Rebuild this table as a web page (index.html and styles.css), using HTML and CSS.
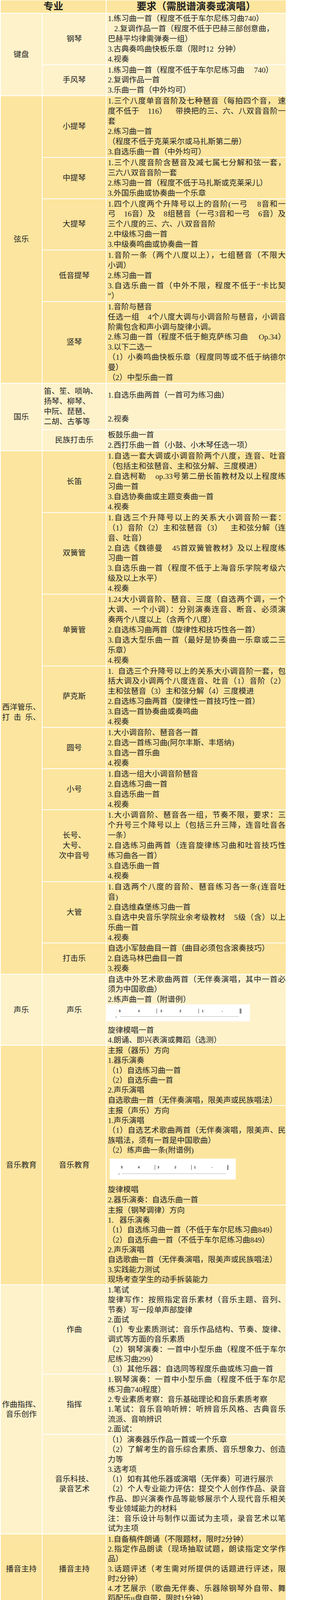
FILE: index.html
```html
<!DOCTYPE html>
<html lang="zh-CN">
<head>
<meta charset="utf-8">
<meta name="viewport" content="width=device-width, initial-scale=1">
<title>专业要求</title>
<link rel="stylesheet" href="styles.css">
</head>
<body>
<table class="sheet">
<colgroup><col class="w1"><col class="w2"><col class="w3"></colgroup>
<thead>
<tr class="hd"><th colspan="2">专业</th><th>要求（需脱谱演奏或演唱）</th></tr>
</thead>

<tbody class="light hi">
<tr>
<td class="cat" rowspan="2">键盘</td>
<td class="sub">钢琴</td>
<td class="req">
<div class="ln">1.练习曲一首（程度不低于车尔尼练习曲740）</div>
<div class="ln in">2.复调作品一首（程度不低于巴赫三部创意曲，</div>
<div class="ln">巴赫平均律需弹奏一组）</div>
<div class="ln">3.古典奏鸣曲快板乐章（限时12&nbsp;&nbsp;分钟）</div>
<div class="ln">4.视奏</div>
</td>
</tr>
<tr>
<td class="sub">手风琴</td>
<td class="req">
<div class="ln">1.练习曲一首（程度不低于车尔尼练习曲&nbsp;&nbsp;&nbsp;&nbsp;&nbsp;740）</div>
<div class="ln">2.复调作品一首</div>
<div class="ln">3.乐曲一首（中外均可）</div>
</td>
</tr>
</tbody>

<tbody class="dark hi">
<tr>
<td class="cat" rowspan="5">弦乐</td>
<td class="sub">小提琴</td>
<td class="req">
<div class="ln j">1.三个八度单音音阶及七种琶音（每拍四个音， 速</div>
<div class="ln j">度不低于&nbsp;&nbsp;&nbsp;&nbsp;116）&nbsp;&nbsp;&nbsp;&nbsp;带换把的三、六、八双音音阶一</div>
<div class="ln">套</div>
<div class="ln">2.练习曲一首</div>
<div class="ln">（程度不低于克莱采尔或马扎斯第二册）</div>
<div class="ln">3.自选乐曲一首（中外均可）</div>
</td>
</tr>
<tr>
<td class="sub">中提琴</td>
<td class="req">
<div class="ln j">1.三个八度音阶含琶音及减七属七分解和弦一套，</div>
<div class="ln">三六八双音音阶一套</div>
<div class="ln">2.练习曲一首（程度不低于马扎斯或克莱采儿）</div>
<div class="ln">3.外国乐曲或协奏曲一个乐章</div>
</td>
</tr>
<tr>
<td class="sub">大提琴</td>
<td class="req">
<div class="ln j">1.四个八度两个升降号以上的音阶(一弓&nbsp;&nbsp;&nbsp;&nbsp;8音和一</div>
<div class="ln j">弓&nbsp;&nbsp;&nbsp;&nbsp;16音）及&nbsp;&nbsp;&nbsp;&nbsp;8组琶音（一弓3音和一弓&nbsp;&nbsp;&nbsp;&nbsp;6音）及</div>
<div class="ln">三个八度的三、六、八双音音阶</div>
<div class="ln">2.中级练习曲一首</div>
<div class="ln">3.中级奏鸣曲或协奏曲一首</div>
</td>
</tr>
<tr>
<td class="sub">低音提琴</td>
<td class="req">
<div class="ln j">1.音阶一条（两个八度以上），七组琶音（不限大</div>
<div class="ln">小调）</div>
<div class="ln">2.练习曲一首</div>
<div class="ln j">3.自选乐曲一首（中外不限，程度不低于“卡比契</div>
<div class="ln">”）</div>
</td>
</tr>
<tr>
<td class="sub">竖琴</td>
<td class="req">
<div class="ln">1.音阶与琶音</div>
<div class="ln j">任选一组&nbsp;&nbsp;&nbsp;&nbsp;4个八度大调与小调音阶与琶音，小调音</div>
<div class="ln">阶需包含和声小调与旋律小调。</div>
<div class="ln j">2.练习曲一首（程度不低于鲍克萨练习曲&nbsp;&nbsp;&nbsp;&nbsp;&nbsp;Op.34）</div>
<div class="ln">3.以下二选一</div>
<div class="ln j">（1）小奏鸣曲快板乐章（程度同等或不低于纳德尔</div>
<div class="ln">曼）</div>
<div class="ln">（2）中型乐曲一首</div>
</td>
</tr>
</tbody>

<tbody class="light hi">
<tr>
<td class="cat" rowspan="2">国乐</td>
<td class="sub left">
<div class="lb">笛、笙、唢呐、</div>
<div class="lb">扬琴、柳琴、</div>
<div class="lb">中阮、琵琶、</div>
<div class="lb">二胡、古筝等</div>
</td>
<td class="req spread">
<div class="ln">1.自选乐曲两首（一首可为练习曲）</div>
<div class="gap"></div>
<div class="ln">2.视奏</div>
</td>
</tr>
<tr>
<td class="sub">民族打击乐</td>
<td class="req">
<div class="ln">板鼓乐曲一首</div>
<div class="ln">2.西打乐曲一首（小鼓、小木琴任选一项）</div>
</td>
</tr>
</tbody>

<tbody class="dark hi">
<tr>
<td class="cat" rowspan="9"><div class="lb">西洋管乐、</div><div class="lb">打&nbsp;&nbsp;击&nbsp;&nbsp;乐、</div></td>
<td class="sub">长笛</td>
<td class="req">
<div class="ln j">1.自选一套大调或小调音阶两个八度，连音、吐音</div>
<div class="ln">（包括主和弦琶音、主和弦分解、三度模进）</div>
<div class="ln j">2.自选柯勒&nbsp;&nbsp;&nbsp;&nbsp;op.33号第二册长笛教材及以上程度练</div>
<div class="ln">习曲一首</div>
<div class="ln">3.自选协奏曲或主题变奏曲一首</div>
<div class="ln">4.视奏</div>
</td>
</tr>
<tr>
<td class="sub">双簧管</td>
<td class="req">
<div class="ln j">1.自选三个升降号以上的关系大小调音阶一套：</div>
<div class="ln j">（1）音阶（2）主和弦琶音（3）&nbsp;&nbsp;&nbsp;&nbsp;主和弦分解（连</div>
<div class="ln">音、吐音）</div>
<div class="ln j">2.自选《魏德曼&nbsp;&nbsp;&nbsp;&nbsp;45首双簧管教材》及以上程度练</div>
<div class="ln">习曲一首</div>
<div class="ln j">3.自选乐曲一首（程度不低于上海音乐学院考级六</div>
<div class="ln">级及以上水平）</div>
<div class="ln">4.视奏</div>
</td>
</tr>
<tr>
<td class="sub">单簧管</td>
<td class="req">
<div class="ln j">1.24大小调音阶、琶音、三度（自选两个调，一个</div>
<div class="ln j">大调、一个小调）：分别演奏连音、断音、必须演</div>
<div class="ln">奏两个八度以上（含两个八度）</div>
<div class="ln">2.自选练习曲两首（旋律性和技巧性各一首）</div>
<div class="ln j">3.自选大型乐曲一首（最好是协奏曲一乐章或二三</div>
<div class="ln">乐章）</div>
<div class="ln">4.视奏</div>
</td>
</tr>
<tr>
<td class="sub">萨克斯</td>
<td class="req">
<div class="ln j">1.&nbsp;&nbsp;自选三个升降号以上的关系大小调音阶一套，包</div>
<div class="ln j">括大调及小调两个八度连音、吐音（1）音阶（2）</div>
<div class="ln">主和弦琶音（3）主和弦分解（4）三度模进</div>
<div class="ln">2.自选练习曲两首（旋律性一首技巧性一首）</div>
<div class="ln">3.自选一首协奏曲或奏鸣曲</div>
<div class="ln">4.视奏</div>
</td>
</tr>
<tr>
<td class="sub">圆号</td>
<td class="req">
<div class="ln">1.大小调音阶、琶音各一首</div>
<div class="ln">2.自选一首练习曲(阿尔丰斯、丰塔纳)</div>
<div class="ln">3.自选一首乐曲</div>
<div class="ln">4.视奏</div>
</td>
</tr>
<tr>
<td class="sub">小号</td>
<td class="req">
<div class="ln">1.自选一组大小调音阶琶音</div>
<div class="ln">2.自选练习曲一首</div>
<div class="ln">3.自选乐曲一首</div>
<div class="ln">4.视奏</div>
</td>
</tr>
<tr>
<td class="sub"><div class="lb">长号、</div><div class="lb">大号、</div><div class="lb">次中音号</div></td>
<td class="req">
<div class="ln j">1.大小调音阶、琶音各一组，节奏不限，要求：三</div>
<div class="ln j">个升号三个降号以上（包括三升三降，连音吐音各</div>
<div class="ln">一条）</div>
<div class="ln j">2.自选练习曲两首（连音旋律练习曲和吐音技巧性</div>
<div class="ln">练习曲各一首）</div>
<div class="ln">3.自选乐曲一首</div>
<div class="ln">4.视奏</div>
</td>
</tr>
<tr>
<td class="sub">大管</td>
<td class="req">
<div class="ln j">1.自选两个八度的音阶、琶音练习各一条(连音吐</div>
<div class="ln">音)</div>
<div class="ln">2.自选维森堡练习曲一首</div>
<div class="ln j">3.自选中央音乐学院业余考级教材&nbsp;&nbsp;&nbsp;&nbsp;5级（含）以上</div>
<div class="ln">乐曲一首</div>
<div class="ln">4.视奏</div>
</td>
</tr>
<tr>
<td class="sub">打击乐</td>
<td class="req">
<div class="ln">自选小军鼓曲目一首（曲目必须包含滚奏技巧）</div>
<div class="ln">2.自选马林巴曲目一首</div>
<div class="ln">3.视奏</div>
</td>
</tr>
</tbody>

<tbody class="light lo">
<tr>
<td class="cat">声乐</td>
<td class="sub">声乐</td>
<td class="req">
<div class="ln j">自选中外艺术歌曲两首（无伴奏演唱，其中一首必</div>
<div class="ln">须为中国歌曲）</div>
<div class="ln">2.练声曲一首（附谱例）</div>
<svg class="score s1" viewBox="0 0 404 48">
<rect width="404" height="48" fill="#ffffff"/>
<g font-family="Liberation Sans, Arial, sans-serif" font-size="9" font-weight="bold" fill="#333333" text-anchor="middle">
<text x="37" y="22">5</text>
<text x="91" y="22">4</text>
<text x="154" y="22">3</text>
<text x="208" y="22">2</text>
<text x="271" y="22">1</text>
<text x="326" y="22">-</text>
</g>
<g stroke="#333333">
<line x1="141.5" y1="12" x2="141.5" y2="26" stroke-width="1"/>
<line x1="259.5" y1="12" x2="259.5" y2="26" stroke-width="1"/>
<line x1="375.5" y1="12" x2="375.5" y2="26" stroke-width="1"/>
<line x1="378.5" y1="12" x2="378.5" y2="26" stroke-width="2"/>
</g>
<text x="27" y="37" font-family="Liberation Sans, Arial, sans-serif" font-size="6" fill="#555555" text-anchor="middle">a</text>
<line x1="38" y1="34.5" x2="373" y2="34.5" stroke="#aaaaaa" stroke-width="1"/>
</svg>
<div class="ln">旋律模唱一首</div>
<div class="ln">4.朗诵、即兴表演或舞蹈（选测）</div>
</td>
</tr>
</tbody>

<tbody class="dark lo">
<tr>
<td class="cat" rowspan="3">音乐教育</td>
<td class="sub" rowspan="3">音乐教育</td>
<td class="req">
<div class="ln">主报（器乐）方向</div>
<div class="ln">1.器乐演奏</div>
<div class="ln">（1）自选练习曲一首</div>
<div class="ln">（2）自选乐曲一首</div>
<div class="ln">2.声乐演唱</div>
<div class="ln">自选歌曲一首（无伴奏演唱，限美声或民族唱法）</div>
</td>
</tr>
<tr>
<td class="req">
<div class="ln">主报（声乐）方向</div>
<div class="ln">1.声乐演唱</div>
<div class="ln j">（1）自选艺术歌曲两首（无伴奏演唱，限美声、民</div>
<div class="ln">族唱法，须有一首是中国歌曲）</div>
<div class="ln">（2）练声曲一条(附谱例)</div>
<svg class="score s2" viewBox="0 0 356 59">
<rect width="356" height="59" fill="#ffffff"/>
<g font-family="Liberation Sans, Arial, sans-serif" font-size="9" font-weight="bold" fill="#333333" text-anchor="middle">
<text x="34" y="28">5</text>
<text x="82" y="28">4</text>
<text x="137" y="28">3</text>
<text x="185" y="28">2</text>
<text x="240" y="28">1</text>
<text x="288" y="28">-</text>
</g>
<g stroke="#333333">
<line x1="127.5" y1="18" x2="127.5" y2="32" stroke-width="1"/>
<line x1="230.5" y1="18" x2="230.5" y2="32" stroke-width="1"/>
<line x1="333" y1="18" x2="333" y2="32" stroke-width="2"/>
</g>
<text x="26" y="45" font-family="Liberation Sans, Arial, sans-serif" font-size="6" fill="#555555" text-anchor="middle">a</text>
<line x1="35" y1="42.5" x2="329" y2="42.5" stroke="#aaaaaa" stroke-width="1"/>
</svg>
<div class="ln">旋律模唱</div>
<div class="ln">2.器乐演奏：自选乐曲一首</div>
</td>
</tr>
<tr>
<td class="req">
<div class="ln">主报（钢琴调律）方向</div>
<div class="ln">1.&nbsp;&nbsp;&nbsp;器乐演奏</div>
<div class="ln">（1）自选练习曲一首（不低于车尔尼练习曲849）</div>
<div class="ln">（2）自选乐曲一首（不低于车尔尼练习曲849）</div>
<div class="ln">2.声乐演唱</div>
<div class="ln">自选歌曲一首（无伴奏演唱，限美声或民族唱法）</div>
<div class="ln">3.实践能力测试</div>
<div class="ln">现场考查学生的动手拆装能力</div>
</td>
</tr>
</tbody>

<tbody class="light lo">
<tr>
<td class="cat" rowspan="3"><div class="lb">作曲指挥、</div><div class="lb">音乐创作</div></td>
<td class="sub">作曲</td>
<td class="req">
<div class="ln">1.笔试</div>
<div class="ln j">旋律写作：按照指定音乐素材（音乐主题、音列、</div>
<div class="ln">节奏）写一段单声部旋律</div>
<div class="ln">2.面试</div>
<div class="ln j">（1）专业素质测试：音乐作品结构、节奏、旋律、</div>
<div class="ln">调式等方面的音乐素质</div>
<div class="ln j">（2）钢琴演奏：一首中小型乐曲（程度不低于车尔</div>
<div class="ln">尼练习曲299）</div>
<div class="ln">（3）其他乐器：自选同等程度乐曲或练习曲一首</div>
</td>
</tr>
<tr>
<td class="sub">指挥</td>
<td class="req">
<div class="ln j">1.钢琴演奏：一首中小型乐曲（程度不低于车尔尼</div>
<div class="ln">练习曲740程度）</div>
<div class="ln">2.专业素质考察：音乐基础理论和音乐素质考察</div>
<div class="ln j">1.笔试：音乐音响听辨：听辨音乐风格、古典音乐</div>
<div class="ln">流派、音响辨识</div>
<div class="ln">2.面试：</div>
</td>
</tr>
<tr>
<td class="sub"><div class="lb">音乐科技、</div><div class="lb">录音艺术</div></td>
<td class="req">
<div class="ln">（1）演奏器乐作品一首或一个乐章</div>
<div class="ln j">（2）了解考生的音乐综合素质、音乐想象力、创造</div>
<div class="ln">力等</div>
<div class="ln">3.选考项</div>
<div class="ln">（1）如有其他乐器或演唱（无伴奏）可进行展示</div>
<div class="ln j">（2）个人专业能力评估：提交个人创作作品、录音</div>
<div class="ln j">作品、即兴演奏作品等能够展示个人现代音乐相关</div>
<div class="ln">专业领域能力的材料</div>
<div class="ln j">注：音乐设计与制作以面试为主项，录音艺术以笔</div>
<div class="ln">试为主项</div>
</td>
</tr>
</tbody>

<tbody class="dark lo">
<tr>
<td class="cat">播音主持</td>
<td class="sub">播音主持</td>
<td class="req">
<div class="ln">1.自备稿件朗诵（不限题材，限时2分钟）</div>
<div class="ln j">2.指定作品朗读（现场抽取试题，朗读指定文学作</div>
<div class="ln">品）</div>
<div class="ln j">3.话题评述（考生需对所提供的话题进行评述，限</div>
<div class="ln">时2分钟）</div>
<div class="ln j">4.才艺展示（歌曲无伴奏、乐器除钢琴外自带、舞</div>
<div class="ln">蹈配乐u盘自带，限时1分钟）</div>
</td>
</tr>
</tbody>
</table>
</body>
</html>
```

FILE: styles.css
```css
/* One pixel of the 807px design, as rendered in the capture. */
:root { --u: calc(1px / 1.1); }

* { box-sizing: border-box; }

html, body {
  margin: 0;
  padding: 0;
  background: #ffffff;
}

body {
  font-family: "Liberation Serif", "Noto Sans CJK SC", serif;
  font-size: calc(21.7 * var(--u));
  color: #222222;
}

.sheet {
  width: calc(807 * var(--u));
  table-layout: fixed;
  border-collapse: separate;
  border-spacing: calc(3 * var(--u));
  margin-top: calc(-1 * var(--u));
  font-size: calc(21.7 * var(--u));
}

.w1 { width: calc(115 * var(--u)); }
.w2 { width: calc(178 * var(--u)); }
.w3 { width: calc(502 * var(--u)); }

.hd th {
  background: #fce59e;
  font-size: calc(28 * var(--u));
  font-weight: bold;
  line-height: calc(35 * var(--u));
  height: calc(35 * var(--u));
  padding: 0;
  text-align: center;
  vertical-align: middle;
}

td {
  padding: 0;
  vertical-align: middle;
}

.light td { background: #fef2cb; }
.dark td { background: #fce59e; }

.cat, .sub {
  text-align: center;
  white-space: nowrap;
}

.sub.left {
  text-align: left;
  padding-left: calc(4 * var(--u));
}

.req {
  padding-left: calc(3 * var(--u));
  vertical-align: top;
}

.ln, .lb {
  display: block;
  white-space: nowrap;
}

.hi td { line-height: calc(28.52 * var(--u)); }
.lo td { line-height: calc(27.8 * var(--u)); }

.hi .ln, .hi .lb {
  height: calc(28.52 * var(--u));
  line-height: calc(28.52 * var(--u));
}

.lo .ln, .lo .lb {
  height: calc(27.8 * var(--u));
  line-height: calc(27.8 * var(--u));
}

.ln.j {
  text-align: justify;
  text-align-last: justify;
}

.ln.in { padding-left: calc(18 * var(--u)); }

.req.spread {
  padding-top: calc(19 * var(--u));
  padding-bottom: calc(15 * var(--u));
}

.gap { height: calc(38 * var(--u)); }

.score { display: block; }

.score.s1 {
  width: calc(404 * var(--u));
  height: calc(48 * var(--u));
  margin: 0 0 calc(11 * var(--u)) calc(-3 * var(--u));
}

.score.s2 {
  width: calc(356 * var(--u));
  height: calc(59 * var(--u));
  margin: calc(10 * var(--u)) 0 calc(15 * var(--u)) calc(5 * var(--u));
}
```
